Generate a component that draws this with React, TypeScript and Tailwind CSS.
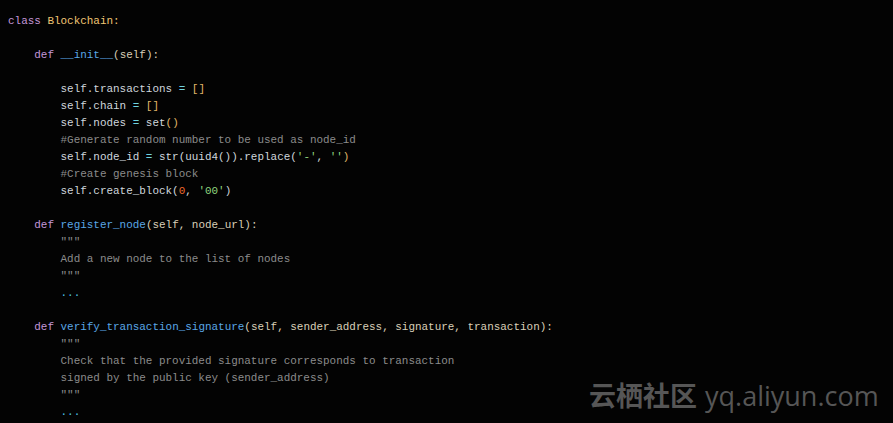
import React from "react";

type Tok = [string, string];

const KW = "text-[#c497d8]";
const CLS = "text-[#f0c674]";
const FN = "text-[#5aa7e6]";
const TX = "text-[#cfd6dc]";
const PN = "text-[#d9cfb8]";
const OP = "text-[#6fd3e0]";
const BR = "text-[#e0b86a]";
const CM = "text-[#8b8b8b]";
const NUM = "text-[#f0682b]";
const STR = "text-[#8fd37e]";
const DOT = "text-[#4ec3e6]";

const lines: { indent: number; toks: Tok[] }[] = [
  { indent: 0, toks: [["class", KW], [" ", TX], ["Blockchain:", CLS]] },
  { indent: 0, toks: [] },
  { indent: 1, toks: [["def", KW], [" ", TX], ["__init__", FN], ["(self):", PN]] },
  { indent: 0, toks: [] },
  { indent: 2, toks: [["self.transactions", TX], [" = ", OP], ["[]", BR]] },
  { indent: 2, toks: [["self.chain", TX], [" = ", OP], ["[]", BR]] },
  { indent: 2, toks: [["self.nodes", TX], [" = ", OP], ["set", TX], ["()", BR]] },
  { indent: 2, toks: [["#Generate random number to be used as node_id", CM]] },
  {
    indent: 2,
    toks: [
      ["self.node_id", TX],
      [" = ", OP],
      ["str(uuid4()).replace(", TX],
      ["'-'", STR],
      [", ", TX],
      ["''", STR],
      [")", BR],
    ],
  },
  { indent: 2, toks: [["#Create genesis block", CM]] },
  {
    indent: 2,
    toks: [["self.create_block(", TX], ["0", NUM], [", ", TX], ["'00'", STR], [")", TX]],
  },
  { indent: 0, toks: [] },
  {
    indent: 1,
    toks: [["def", KW], [" ", TX], ["register_node", FN], ["(self, node_url):", PN]],
  },
  { indent: 2, toks: [['"""', CM]] },
  { indent: 2, toks: [["Add a new node to the list of nodes", CM]] },
  { indent: 2, toks: [['"""', CM]] },
  { indent: 2, toks: [["...", DOT]] },
  { indent: 0, toks: [] },
  {
    indent: 1,
    toks: [
      ["def", KW],
      [" ", TX],
      ["verify_transaction_signature", FN],
      ["(self, sender_address, signature, transaction):", PN],
    ],
  },
  { indent: 2, toks: [['"""', CM]] },
  { indent: 2, toks: [["Check that the provided signature corresponds to transaction", CM]] },
  { indent: 2, toks: [["signed by the public key (sender_address)", CM]] },
  { indent: 2, toks: [['"""', CM]] },
  { indent: 2, toks: [["...", DOT]] },
];

export default function App() {
  return (
    <div className="relative w-[893px] h-[423px] overflow-hidden bg-[#030303]">
      <div className="pt-[13px] pl-[8px] font-['Liberation_Mono',monospace] text-[10.95px] whitespace-pre">
        {lines.map((l, i) => (
          <div key={i} className="h-[17px] leading-[17px]">
            {"    ".repeat(l.indent)}
            {l.toks.map(([t, c], j) => (
              <span key={j} className={c}>
                {t}
              </span>
            ))}
          </div>
        ))}
      </div>
      <div className="absolute left-[589px] top-[378px] flex items-baseline gap-[8px] text-[#565656]">
        <span className="font-['Noto_Sans_CJK_SC',sans-serif] font-bold text-[27px] leading-[34px]">
          云栖社区
        </span>
        <span className="font-['Open_Sans',sans-serif] text-[27px] leading-[34px]">
          yq.aliyun.com
        </span>
      </div>
    </div>
  );
}
